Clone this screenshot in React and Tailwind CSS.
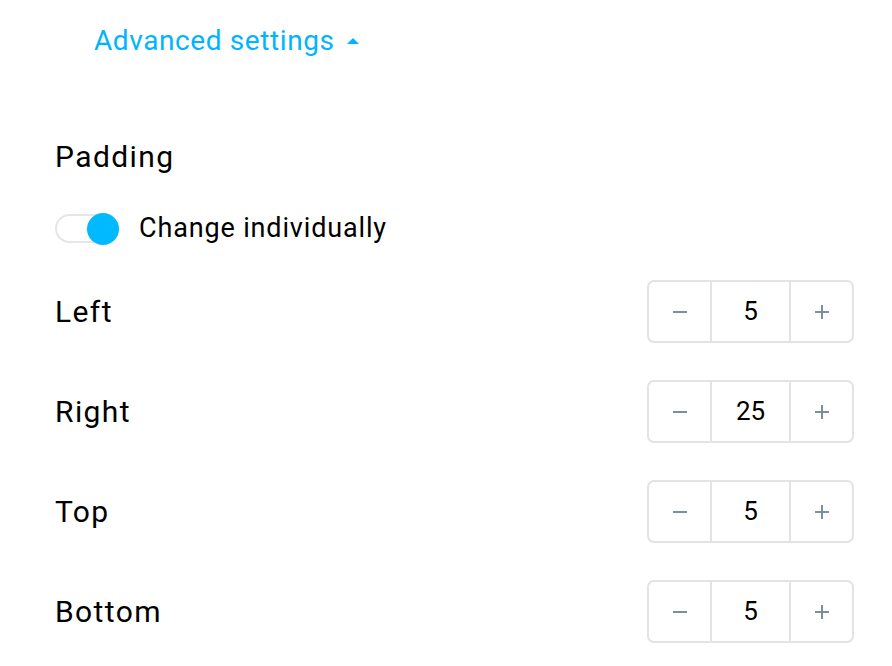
import React, { useState } from 'react';

const Stepper = ({ value }) => (
  <div className="flex h-[63px] w-[207px] rounded-[7px] border-2 border-[#e3e3e3] bg-white">
    <button className="flex w-[63px] items-center justify-center border-r-2 border-[#e3e3e3]">
      <svg width="14" height="14" viewBox="0 0 14 14">
        <path d="M0 7h14" stroke="#7b909c" strokeWidth="2" />
      </svg>
    </button>
    <div className="flex flex-1 items-center justify-center text-[26px] text-black">{value}</div>
    <button className="flex w-[63px] items-center justify-center border-l-2 border-[#e3e3e3]">
      <svg width="14" height="14" viewBox="0 0 14 14">
        <path d="M0 7h14M7 0v14" stroke="#7b909c" strokeWidth="2" />
      </svg>
    </button>
  </div>
);

const rows = [
  { label: 'Left', value: 5 },
  { label: 'Right', value: 25 },
  { label: 'Top', value: 5 },
  { label: 'Bottom', value: 5 },
];

export default function App() {
  const [on, setOn] = useState(true);
  return (
    <div className="min-h-screen bg-white pl-[55px] pr-[38px] font-['Roboto',sans-serif] text-black">
      <div className="mt-[26px] flex h-[30px] items-center pl-[39px]">
        <span className="text-[28px] leading-[30px] tracking-[0.6px] text-[#00b4ff]">Advanced settings</span>
        <svg className="ml-[12px]" width="12" height="6" viewBox="0 0 12 6">
          <path d="M0 6L6 0L12 6Z" fill="#00b4ff" />
        </svg>
      </div>

      <div className="mt-[84px] text-[30px] leading-[34px] tracking-[1.4px]">Padding</div>

      <div className="mt-[38px] flex h-[32px] items-center">
        <button
          onClick={() => setOn(!on)}
          className="relative h-[29px] w-[64px] rounded-full border-2 border-[#e6e6e6] bg-white"
        >
          <span
            className={
              on
                ? 'absolute right-[-2px] top-[-3px] h-[32px] w-[32px] rounded-full bg-[#00b9ff]'
                : 'absolute left-[-2px] top-[-3px] h-[32px] w-[32px] rounded-full bg-[#cccccc]'
            }
          />
        </button>
        <span className="ml-[20px] text-[27px] leading-[32px] tracking-[0.85px]">Change individually</span>
      </div>

      <div className="mt-[36px] flex flex-col gap-[37px]">
        {rows.map((r) => (
          <div key={r.label} className="flex items-center justify-between">
            <span className="text-[30px] tracking-[1.4px]">{r.label}</span>
            <Stepper value={r.value} />
          </div>
        ))}
      </div>
    </div>
  );
}
